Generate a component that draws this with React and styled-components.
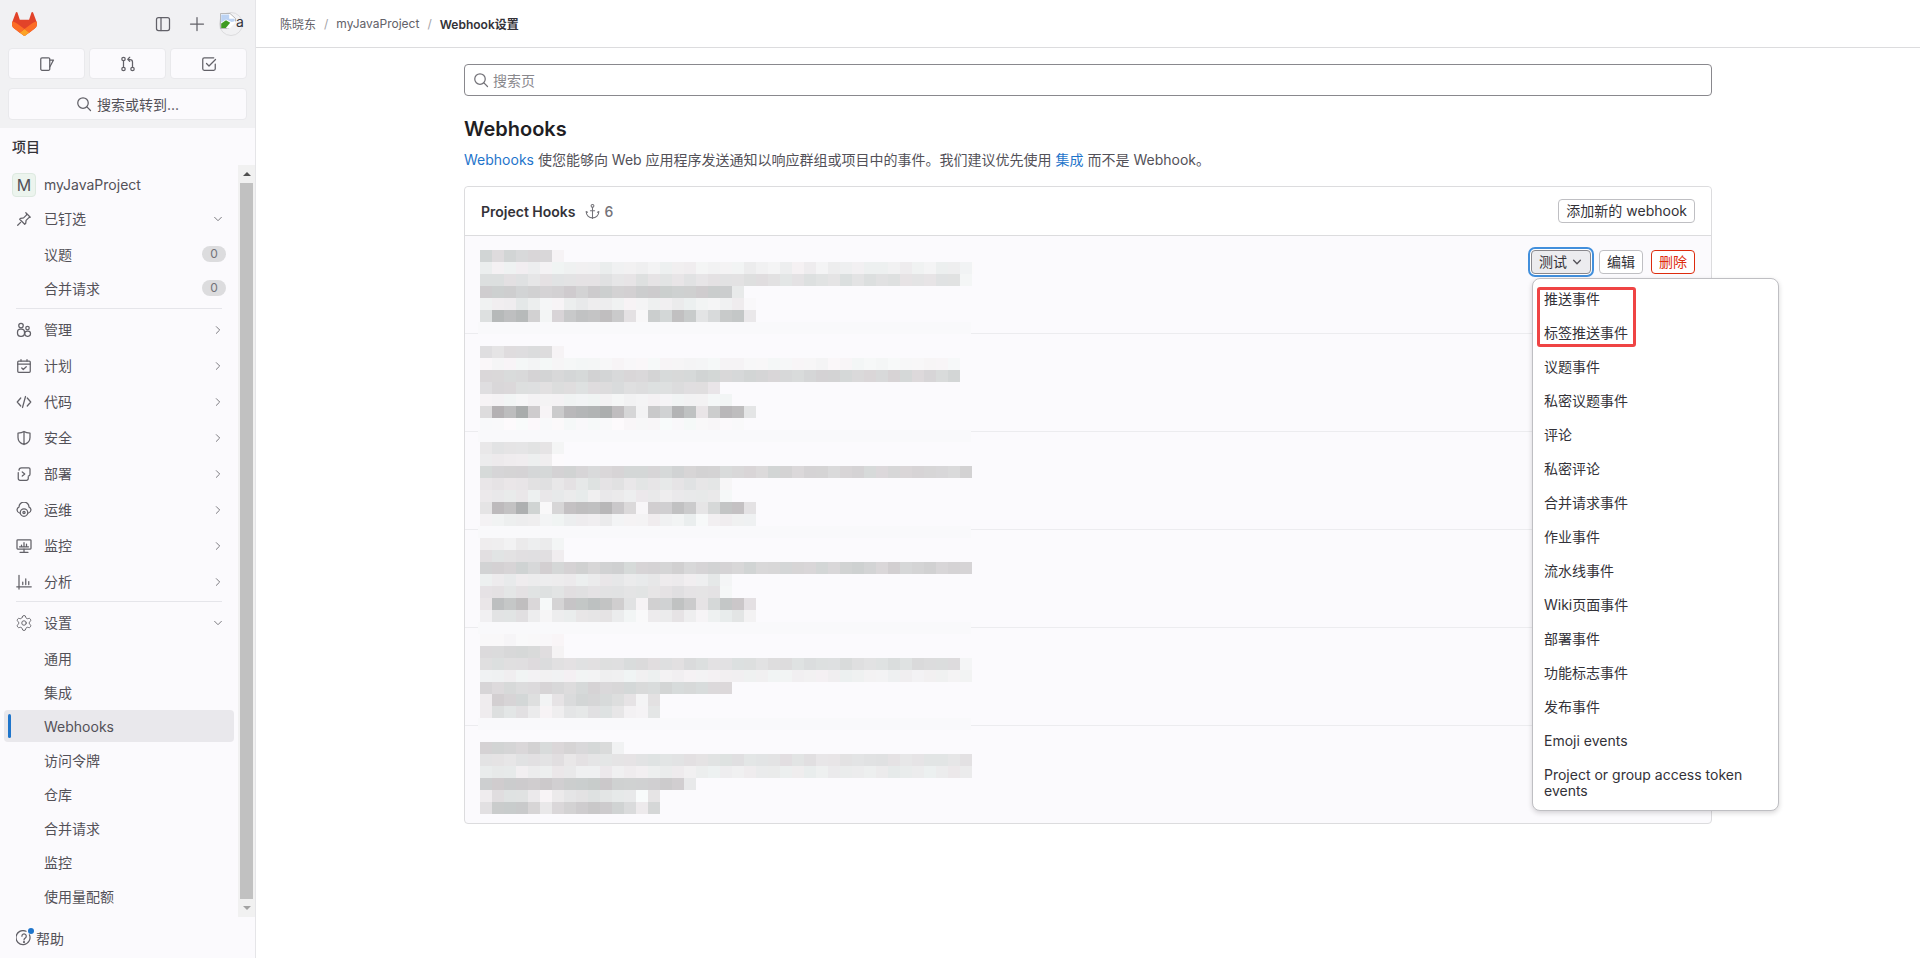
import React from "react";
import styled, { createGlobalStyle } from "styled-components";
import { Settings, Anchor } from "lucide-react";

const Global = createGlobalStyle`
  html, body { margin: 0; height: 100%; overflow: hidden; background: #fff; }
  #root { height: 100%; }
  * { box-sizing: border-box; }
  body { font-family: Inter, "Noto Sans CJK SC", "Liberation Sans", sans-serif; font-size: 14px; color: #333238; }
`;

const Page = styled.div`display: flex; width: 1920px; height: 958px;`;

/* ---------- icons ---------- */
const Svg = styled.svg`
  width: ${(p) => p.$size || 16}px;
  height: ${(p) => p.$size || 16}px;
  flex: none;
  fill: none;
  stroke: ${(p) => p.$color || "#626168"};
  stroke-width: ${(p) => p.$w || 1.25};
  stroke-linecap: round;
  stroke-linejoin: round;
`;

const glyphs = {
  panel: <><rect x="1.5" y="1.5" width="13" height="13" rx="2" /><path d="M6 1.5v13" /></>,
  plus: <path d="M8 1.5v13M1.5 8h13" />,
  search: <><circle cx="7" cy="7" r="5.25" /><path d="M10.9 10.9l3.6 3.6" /></>,
  issues: <><path d="M3 1.75h6.5A1.25 1.25 0 0 1 10.75 3v10a1.25 1.25 0 0 1-1.25 1.25H3A1.25 1.25 0 0 1 1.75 13V3A1.25 1.25 0 0 1 3 1.75z" /><path d="M10.75 4h3.75l-3.75 7" /></>,
  merge: <><circle cx="3.5" cy="3" r="1.7" /><circle cx="3.5" cy="13" r="1.7" /><circle cx="12.5" cy="13" r="1.7" /><path d="M3.5 4.7v6.6M12.5 11.3V6a2.5 2.5 0 0 0-2.5-2.5H8M9.7 1.3L7.7 3.4l2 2" /></>,
  todo: <><path d="M14.25 8v4.75a1.5 1.5 0 0 1-1.5 1.5h-9.5a1.5 1.5 0 0 1-1.5-1.5v-9.5a1.5 1.5 0 0 1 1.5-1.5h9.5" /><path d="M5.5 7.5L8 10l6.5-6.5" /></>,
  pin: <path d="M9.8 1.7l4.5 4.5-1.4.4-2.8 2.8-.4 2.9-1 1-5-5 1-1 2.9-.4 2.8-2.8.4-1.4zM4.6 11.4L1.7 14.3" />,
  users: <><circle cx="5" cy="3.5" r="2.25" /><rect x="1.5" y="7" width="7" height="7.25" rx="3" /><circle cx="11.5" cy="6" r="1.75" /><rect x="8.8" y="9" width="5.7" height="5.25" rx="2.4" /></>,
  calendar: <><rect x="1.75" y="3" width="12.5" height="11.25" rx="1" /><path d="M1.75 6h12.5M5 1.5V3M11 1.5V3M5.75 10l1.5 1.5 3-2.75" /></>,
  code: <path d="M4.75 4L1.25 8l3.5 4M11.25 4l3.5 4-3.5 4M9.5 2.5l-3 11" />,
  shield: <path d="M8 1.5C10 2.8 12.4 3 14 3v4.5c0 3.4-2.4 5.9-6 7-3.6-1.1-6-3.6-6-7V3c1.6 0 4-.2 6-1.5zM8 1.5v13" />,
  deploy: <path d="M2.25 6.5v6A1.75 1.75 0 0 0 4 14.25h6.5a1.75 1.75 0 0 0 1.75-1.75V11M3 4.2C3 3 4 1.75 5.5 1.75h7.25A1.25 1.25 0 0 1 14 3v5.25a1.75 1.75 0 0 1-1.75 1.75M6.25 6l2.5 2-2.5 2" />,
  ops: <><path d="M3.6 11a3.1 3.1 0 0 1-.6-5.9 5 5 0 0 1 10 0 3.1 3.1 0 0 1-.6 5.9" /><circle cx="8" cy="10.5" r="3.75" /><circle cx="8" cy="10.5" r="1.1" /></>,
  monitor: <><rect x="1" y="1.75" width="14" height="9.25" rx=".8" /><path d="M8 11v3M4 14.25h8M3.5 8.75h9M5.5 8.5V7M8 8.5V4.5M10.5 8.5V6" /></>,
  analytics: <path d="M3 1.25V15M.75 12.75h14.5M6.75 10.5V8M9.75 10.5V4.75M12.75 10.5V7.5" />,
  help: <><path d="M13.4 4.8A7 7 0 1 1 10 1.3" /><path d="M5.9 6.2A2.2 2.2 0 1 1 9.3 8c-.8.5-1.3 1-1.3 1.9" /><circle cx="8" cy="12" r=".5" /></>,
  down: <path d="M3.5 5.75L8 10.25l4.5-4.5" />,
  right: <path d="M5.75 3.5L10.25 8l-4.5 4.5" />,
};

const Icon = ({ name, ...rest }) => <Svg viewBox="0 0 16 16" {...rest}>{glyphs[name]}</Svg>;

const Tanuki = () => (
  <svg width="25" height="24" viewBox="0 0 25 24">
    <path fill="#E24329" d="m24.507 9.5-.034-.09L21.082.562a.896.896 0 0 0-1.694.091l-2.29 7.01H7.825L5.535.653a.898.898 0 0 0-1.694-.09L.451 9.411.416 9.5a6.297 6.297 0 0 0 2.09 7.278l.012.01.03.022 5.16 3.867 2.56 1.935 1.554 1.176a1.051 1.051 0 0 0 1.268 0l1.555-1.176 2.56-1.935 5.197-3.89.014-.01A6.297 6.297 0 0 0 24.507 9.5Z" />
    <path fill="#FC6D26" d="m24.507 9.5-.034-.09a11.44 11.44 0 0 0-4.56 2.051l-7.447 5.632 4.742 3.584 5.197-3.89.014-.01A6.297 6.297 0 0 0 24.507 9.5Z" />
    <path fill="#FCA326" d="m7.707 20.677 2.56 1.935 1.555 1.176a1.051 1.051 0 0 0 1.268 0l1.555-1.176 2.56-1.935-4.743-3.584-4.755 3.584Z" />
    <path fill="#FC6D26" d="M5.01 11.461a11.43 11.43 0 0 0-4.56-2.05L.416 9.5a6.297 6.297 0 0 0 2.09 7.278l.012.01.03.022 5.16 3.867 4.745-3.584-7.444-5.632Z" />
  </svg>
);

const BrokenImage = () => (
  <svg width="16" height="16" viewBox="0 0 16 16" style={{ flex: "none" }}>
    <path d="M.5.5h9.5l5.5 5v3l-6.5 7H.5z" fill="#fff" stroke="#a8a8a8" strokeWidth=".8" />
    <path d="M1.2 1.4h8v4.4h5.4v2.4l-3 .8L6 6.5l-4.8 3z" fill="#bcd3f3" />
    <path d="M1.2 15v-4.6L6 7.2l4.2 2.5L5.8 15z" fill="#3f9b22" />
    <path d="M6.5 15.4l4.5-5.2 4.6-2v1.2l-5.6 6z" fill="#fff" />
  </svg>
);

/* ---------- sidebar ---------- */
const Sidebar = styled.aside`
  width: 256px;
  flex: none;
  display: flex;
  flex-direction: column;
  background: #fbfafd;
  border-right: 1px solid #e5e5e8;
`;
const TopPanel = styled.div`
  height: 128px;
  flex: none;
  background: #f1f1f3;
  padding: 0 8px;
`;
const PanelHeader = styled.div`
  height: 48px;
  display: flex;
  align-items: center;
  padding-left: 4px;
`;
const HeaderActions = styled.div`
  margin-left: auto;
  display: flex;
  align-items: center;
  gap: 18px;
  margin-right: 4px;
`;
const Avatar = styled.div`
  width: 24px;
  height: 24px;
  margin-left: -4px;
  border-radius: 50%;
  border: 1px solid #dcdcde;
  display: flex;
  align-items: flex-start;
  font-size: 14px;
  line-height: 18px;
  color: #333238;
  white-space: nowrap;
`;
const QuickGrid = styled.div`
  display: grid;
  grid-template-columns: repeat(3, 1fr);
  gap: 4px;
`;
const QuickButton = styled.div`
  height: 31px;
  background: #fbfafd;
  border: 1px solid #e9e9ec;
  border-radius: 4px;
  display: flex;
  align-items: center;
  justify-content: center;
`;
const SearchButton = styled(QuickButton)`
  margin-top: 9px;
  height: 32px;
  gap: 5px;
  color: #535158;
  font-size: 14px;
`;
const SectionTitle = styled.div`
  height: 37px;
  flex: none;
  padding: 10px 12px 0;
  font-size: 14px;
  line-height: 18px;
  font-weight: 500;
  color: #333238;
`;
const ScrollWrap = styled.div`
  height: 752px;
  flex: none;
  display: flex;
`;
const NavList = styled.nav`
  width: 238px;
  flex: none;
  display: flex;
  flex-direction: column;
  color: #535158;
`;
const Row = styled.div`
  height: 36px;
  flex: none;
  display: flex;
  align-items: center;
  padding: 0 14px 0 16px;
  line-height: 18px;
`;
const ProjectRow = styled(Row)`
  padding-top: 4px;
`;
const IconSlot = styled.span`
  width: 28px;
  flex: none;
  display: flex;
  align-items: center;
`;
const GearSlot = styled(IconSlot)`
  margin-left: -1px;
  width: 29px;
`;
const Chevron = styled.span`
  margin-left: auto;
  display: flex;
`;
const ProjectMark = styled.span`
  width: 24px;
  height: 24px;
  flex: none;
  margin: 0 8px 0 -4px;
  background: #ecf4ee;
  border: 1px solid #dde9e0;
  border-radius: 4px;
  display: flex;
  align-items: center;
  justify-content: center;
  font-size: 16px;
  color: #535158;
`;
const SubList = styled.div`
  display: flex;
  flex-direction: column;
  gap: 2px;
  margin-top: ${(p) => p.$top}px;
`;
const SubRow = styled.div`
  position: relative;
  height: 32px;
  margin: 0 4px;
  padding: 0 8px 0 40px;
  display: flex;
  align-items: center;
  border-radius: 4px;
  background: ${(p) => (p.$active ? "#e9e8ec" : "transparent")};
  &::before {
    content: "";
    display: ${(p) => (p.$active ? "block" : "none")};
    position: absolute;
    left: 4px;
    top: 4px;
    bottom: 4px;
    width: 3px;
    border-radius: 2px;
    background: #1f75cb;
  }
`;
const Count = styled.span`
  margin-left: auto;
  width: 24px;
  height: 16px;
  border-radius: 8px;
  background: #dcdcde;
  color: #737278;
  font-size: 12px;
  line-height: 16px;
  text-align: center;
`;
const Divider = styled.div`
  height: 1px;
  flex: none;
  margin: ${(p) => p.$top}px 16px 3px;
  background: #e5e5ea;
`;
const ScrollBar = styled.div`
  width: 17px;
  flex: none;
  background: #f1f1f1;
  display: flex;
  flex-direction: column;
`;
const ScrollArrow = styled.div`
  height: 18px;
  flex: none;
  display: flex;
  align-items: center;
  justify-content: center;
  &::after {
    content: "";
    border-left: 4px solid transparent;
    border-right: 4px solid transparent;
    ${(p) => (p.$up ? "border-bottom: 4px solid #505050;" : "border-top: 4px solid #a3a3a3;")}
  }
`;
const ScrollThumb = styled.div`
  flex: 1;
  margin: 0 2px;
  background: #c1c1c1;
`;
const HelpRow = styled.div`
  flex: 1;
  display: flex;
  align-items: center;
  padding-left: 16px;
  gap: 4px;
  color: #535158;
`;
const HelpIcon = styled.span`
  position: relative;
  display: flex;
  &::after {
    content: "";
    position: absolute;
    top: -2px;
    right: -2px;
    width: 6px;
    height: 6px;
    border-radius: 50%;
    background: #1f75cb;
  }
`;

/* ---------- main ---------- */
const Main = styled.main`
  flex: 1;
  min-width: 0;
  display: flex;
  flex-direction: column;
`;
const TopBar = styled.header`
  height: 48px;
  flex: none;
  border-bottom: 1px solid #dcdcde;
  padding-left: 24px;
  display: flex;
  align-items: center;
  gap: 8px;
  font-size: 12px;
  color: #626168;
`;
const Sep = styled.span`color: #a4a3a8;`;
const Current = styled.strong`font-weight: 600; color: #333238;`;
const Container = styled.div`
  width: 1248px;
  margin: 0 auto;
  padding-top: 16px;
  position: relative;
`;
const SearchBox = styled.div`
  height: 32px;
  border: 1px solid #89888d;
  border-radius: 4px;
  display: flex;
  align-items: center;
  gap: 4px;
  padding-left: 8px;
  color: #89888d;
`;
const Title = styled.h1`
  margin: 21px 0 0;
  font-size: 20px;
  line-height: 24px;
  font-weight: 600;
  color: #1f1e24;
`;
const Lead = styled.p`
  margin: 9px 0 0;
  line-height: 20px;
  color: #535158;
`;
const Link = styled.span`color: #1f75cb;`;
const Card = styled.section`
  margin-top: 16px;
  border: 1px solid #dcdcde;
  border-radius: 4px;
  background: #fbfafd;
`;
const CardHeader = styled.div`
  height: 49px;
  padding: 0 16px;
  display: flex;
  align-items: center;
  background: #fff;
  border-bottom: 1px solid #dcdcde;
  border-radius: 4px 4px 0 0;
`;
const CardTitle = styled.span`font-weight: 600; color: #333238;`;
const HookCount = styled.span`
  display: flex;
  align-items: center;
  gap: 4px;
  margin-left: 8px;
  color: #737278;
  font-weight: 500;
`;
const HookList = styled.div`position: relative;`;
const HookRow = styled.div`
  height: 98px;
  padding: 14px 16px 0 0;
  display: flex;
  justify-content: flex-end;
  align-items: flex-start;
  border-bottom: 1px solid #ececef;
  &:last-of-type { border-bottom: 0; height: 97px; }
`;
const Btn = styled.button`
  height: 24px;
  padding: 0 7px;
  border: 1px solid ${(p) => (p.$danger ? "#dd2b0e" : "#bfbfc3")};
  border-radius: 4px;
  background: #fff;
  font: inherit;
  font-size: 14px;
  line-height: 18px;
  color: ${(p) => (p.$danger ? "#dd2b0e" : "#333238")};
  display: flex;
  align-items: center;
  white-space: nowrap;
`;
const AddBtn = styled(Btn)`margin-left: auto;`;
const TestBtn = styled(Btn)`
  padding: 0 7px;
  gap: 4px;
  background: #ececef;
  border-color: #89888d;
  box-shadow: 0 0 0 1px #fff, 0 0 0 3px #428fdc;
`;
const Actions = styled.div`
  position: relative;
  display: flex;
  gap: 8px;
`;
const Dropdown = styled.div`
  position: absolute;
  top: 28px;
  left: 1px;
  width: 247px;
  height: 533px;
  z-index: 3;
  background: #fff;
  border: 1px solid #bfbfc3;
  border-radius: 8px;
  box-shadow: 0 2px 5px rgba(31, 30, 36, 0.18);
  padding-top: 4px;
`;
const MenuItem = styled.div`
  min-height: 34px;
  padding: 8px 12px 8px 11px;
  line-height: 16px;
  color: #333238;
`;
const Highlight = styled.div`
  position: absolute;
  left: 4px;
  top: 8px;
  width: 99px;
  height: 60px;
  border: 3px solid #ef4444;
  border-radius: 3px;
`;
const MosaicSvg = styled.svg`
  position: absolute;
  left: 13px;
  top: 14px;
  pointer-events: none;
`;

/* ---------- mosaic data ---------- */
const P = [225,185,192,180,210,245,210,195,190,190,185,200,220,245,205,210,190,200,230,212,195,195,228].map((v) => v - 195);
const noise = (a, b) => {
  const s = Math.sin(a * 12.9898 + b * 78.233) * 43758.5453;
  return s - Math.floor(s);
};
// n cells at level b, optional lighter tail cell, optional pattern strength k
const mosaicRows = [
  { n: 6, b: 216, t: 243 }, { n: 41, b: 240, t: 247 }, { n: 40, b: 226, t: 246 }, { n: 21, b: 208, t: 232 }, { n: 23, b: 238, k: 0.2 }, { n: 23, b: 197, k: 1 }, null,
  null, { n: 6, b: 224, t: 243 }, { n: 40, b: 246 }, { n: 40, b: 214 }, { n: 19, b: 220, t: 230 }, { n: 21, b: 244 }, { n: 23, b: 188, k: 1.15 }, { n: 22, b: 249 }, null,
  { n: 6, b: 228, t: 243 }, { n: 6, b: 234, t: 248 }, { n: 41, b: 214 }, { n: 20, b: 228, t: 246 }, { n: 20, b: 236, t: 246 }, { n: 23, b: 195, k: 1.05 }, { n: 23, b: 240, k: 0.15 }, null,
  { n: 6, b: 238, t: 248 }, { n: 6, b: 226, t: 242 }, { n: 41, b: 212 }, { n: 20, b: 235, t: 247 }, { n: 20, b: 226, t: 242 }, { n: 23, b: 200, k: 0.9 }, { n: 23, b: 232, k: 0.35 }, null,
  { n: 7, b: 247 }, { n: 6, b: 218, t: 242 }, { n: 40, b: 222, t: 242 }, { n: 41, b: 241 }, { n: 21, b: 216 }, { n: 15, b: 218, k: 0.55 }, { n: 15, b: 229, k: 0.35 }, null,
  null, { n: 11, b: 214, t: 245 }, { n: 41, b: 227 }, { n: 41, b: 236 }, { n: 17, b: 205, t: 234 }, { n: 15, b: 228, k: 0.35 }, { n: 15, b: 207, k: 0.55 },
];
const stripRows = [6, 15, 23, 31, 39];
const CW = 12;
const X0 = 2;

const Mosaic = () => {
  const cells = [];
  mosaicRows.forEach((r, y) => {
    if (!r) return;
    const count = r.n + (r.t ? 1 : 0);
    for (let x = 0; x < count; x++) {
      const isTail = r.t && x === r.n;
      let v = isTail ? r.t : r.b + (r.k ? (P[x] || 0) * r.k : 0);
      v += (noise(x, y) - 0.5) * (r.b > 240 ? 5 : 9);
      const tint = (noise(y, x + 5) - 0.5) * 5;
      const c = (d) => Math.max(0, Math.min(255, Math.round(v + d)));
      cells.push(
        <rect key={`${x}-${y}`} x={X0 + x * CW} y={y * 12} width={CW} height={12} fill={`rgb(${c(tint)},${c(-tint / 2)},${c(1)})`} />
      );
    }
  });
  return (
    <MosaicSvg width="496" height="564" viewBox="0 0 496 564" shapeRendering="crispEdges">
      {stripRows.map((y) => <rect key={y} x="0" y={y * 12} width="493" height="12" fill="#f9f9fb" />)}
      {cells}
    </MosaicSvg>
  );
};

const mainNav = [
  ["users", "管理"], ["calendar", "计划"], ["code", "代码"], ["shield", "安全"],
  ["deploy", "部署"], ["ops", "运维"], ["monitor", "监控"], ["analytics", "分析"],
];
const settingsNav = ["通用", "集成", "Webhooks", "访问令牌", "仓库", "合并请求", "监控", "使用量配额"];
const events = ["推送事件", "标签推送事件", "议题事件", "私密议题事件", "评论", "私密评论", "合并请求事件", "作业事件", "流水线事件", "Wiki页面事件", "部署事件", "功能标志事件", "发布事件", "Emoji events", "Project or group access token events"];

export default function App() {
  return (
    <Page>
      <Global />
      <Sidebar>
        <TopPanel>
          <PanelHeader>
            <Tanuki />
            <HeaderActions>
              <Icon name="panel" />
              <Icon name="plus" />
              <Avatar><BrokenImage />a</Avatar>
            </HeaderActions>
          </PanelHeader>
          <QuickGrid>
            <QuickButton><Icon name="issues" /></QuickButton>
            <QuickButton><Icon name="merge" /></QuickButton>
            <QuickButton><Icon name="todo" /></QuickButton>
          </QuickGrid>
          <SearchButton><Icon name="search" />搜索或转到...</SearchButton>
        </TopPanel>
        <SectionTitle>项目</SectionTitle>
        <ScrollWrap>
          <NavList>
            <ProjectRow><ProjectMark>M</ProjectMark>myJavaProject</ProjectRow>
            <Row>
              <IconSlot><Icon name="pin" /></IconSlot>已钉选
              <Chevron><Icon name="down" $size={12} $color="#737278" /></Chevron>
            </Row>
            <SubList $top={1}>
              <SubRow>议题<Count>0</Count></SubRow>
              <SubRow>合并请求<Count>0</Count></SubRow>
            </SubList>
            <Divider $top={4} />
            {mainNav.map(([icon, label]) => (
              <Row key={label}>
                <IconSlot><Icon name={icon} /></IconSlot>{label}
                <Chevron><Icon name="right" $size={12} $color="#737278" /></Chevron>
              </Row>
            ))}
            <Divider $top={1} />
            <Row>
              <GearSlot><Settings size={18} strokeWidth={1.25} color="#626168" /></GearSlot>设置
              <Chevron><Icon name="down" $size={12} $color="#737278" /></Chevron>
            </Row>
            <SubList $top={1}>
              {settingsNav.map((s) => <SubRow key={s} $active={s === "Webhooks"}>{s}</SubRow>)}
            </SubList>
          </NavList>
          <ScrollBar>
            <ScrollArrow $up />
            <ScrollThumb />
            <ScrollArrow />
          </ScrollBar>
        </ScrollWrap>
        <HelpRow>
          <HelpIcon><Icon name="help" /></HelpIcon>帮助
        </HelpRow>
      </Sidebar>
      <Main>
        <TopBar>
          <span>陈晓东</span><Sep>/</Sep><span>myJavaProject</span><Sep>/</Sep><Current>Webhook设置</Current>
        </TopBar>
        <Container>
          <SearchBox><Icon name="search" $color="#737278" />搜索页</SearchBox>
          <Title>Webhooks</Title>
          <Lead><Link>Webhooks</Link> 使您能够向 Web 应用程序发送通知以响应群组或项目中的事件。我们建议优先使用 <Link>集成</Link> 而不是 Webhook。</Lead>
          <Card>
            <CardHeader>
              <CardTitle>Project Hooks</CardTitle>
              <HookCount><Anchor size={17} strokeWidth={1.5} color="#737278" />6</HookCount>
              <AddBtn>添加新的 webhook</AddBtn>
            </CardHeader>
            <HookList>
              <Mosaic />
              <HookRow>
                <Actions>
                  <TestBtn>测试<Icon name="down" $size={12} $w={1.8} $color="#535158" /></TestBtn>
                  <Btn>编辑</Btn>
                  <Btn $danger>删除</Btn>
                  <Dropdown>
                    {events.map((e) => <MenuItem key={e}>{e}</MenuItem>)}
                    <Highlight />
                  </Dropdown>
                </Actions>
              </HookRow>
              <HookRow /><HookRow /><HookRow /><HookRow /><HookRow />
            </HookList>
          </Card>
        </Container>
      </Main>
    </Page>
  );
}
